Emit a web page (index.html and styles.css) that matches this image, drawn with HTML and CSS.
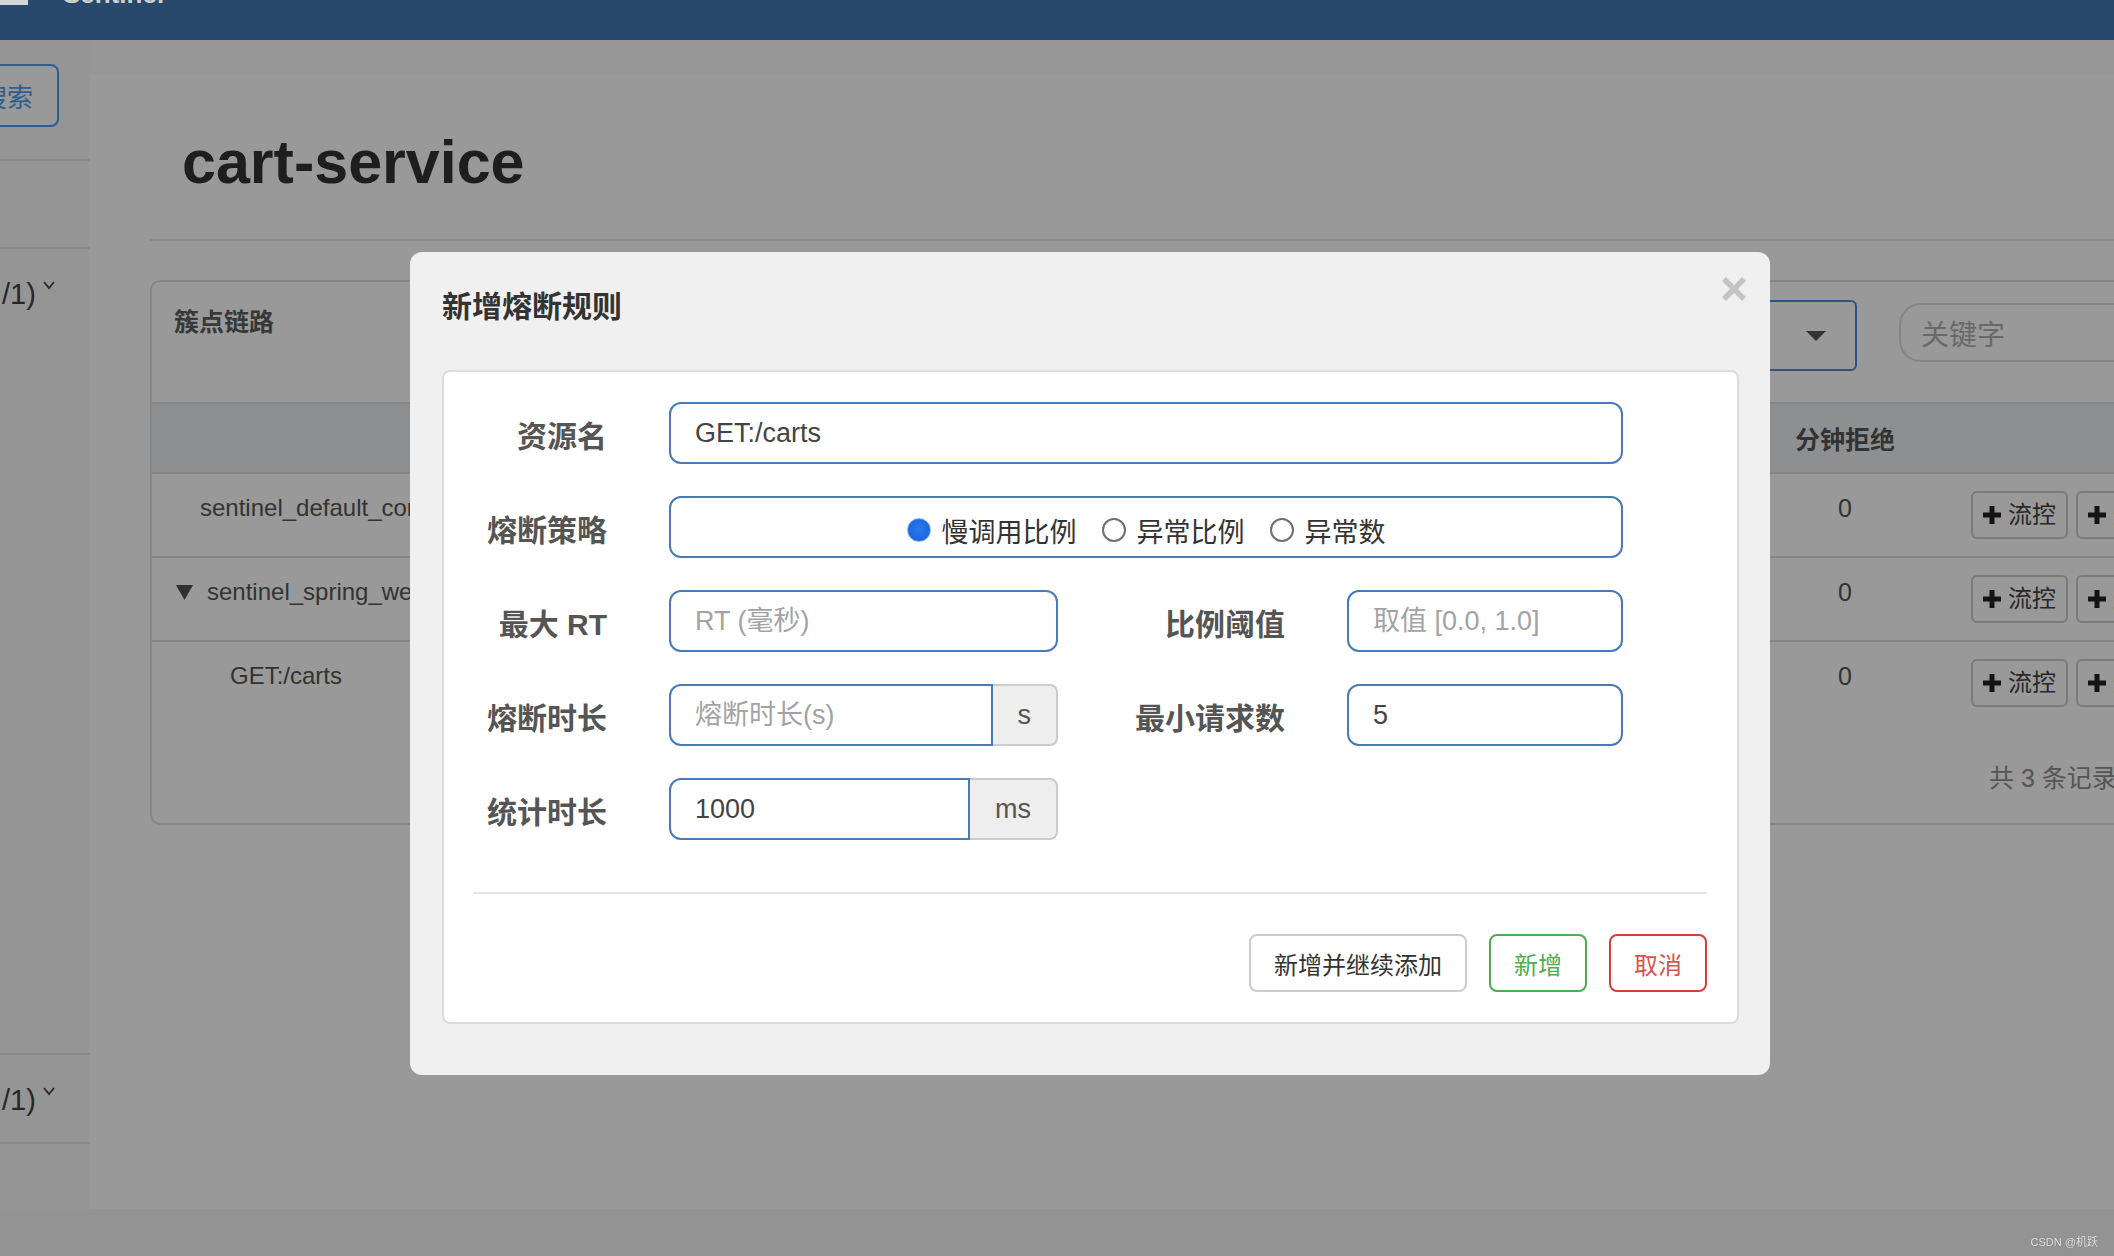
FILE: index.html
```html
<!DOCTYPE html>
<html lang="zh-CN">
<head>
<meta charset="utf-8">
<title>cart-service - 新增熔断规则</title>
<link rel="stylesheet" href="styles.css">
</head>
<body>
<header class="navbar">
  <div class="brand"><span class="brand-icon"></span><span class="brand-text">Sentinel</span></div>
</header>

<div class="layout">
  <aside class="sidebar">
    <div class="search-row"><button class="search-btn" type="button">搜索</button></div>
    <div class="app-item blank"></div>
    <div class="app-item expanded">
      <div class="app-head">/1)<svg class="chev" width="12" height="10" viewBox="0 0 12 10"><path d="M1 2l5 6 5-6" fill="none" stroke="#444" stroke-width="1.8"/></svg></div>
    </div>
    <div class="app-item last">
      <div class="app-head">/1)<svg class="chev" width="12" height="10" viewBox="0 0 12 10"><path d="M1 2l5 6 5-6" fill="none" stroke="#444" stroke-width="1.8"/></svg></div>
    </div>
  </aside>

  <main class="main">
    <div class="page">
      <h1 class="page-title">cart-service</h1>
      <hr class="title-rule">
      <section class="panel">
        <div class="panel-head">
          <div class="panel-title">簇点链路</div>
          <div class="select-box"><svg width="20" height="10" viewBox="0 0 20 10"><path d="M0 0h20L10 10z" fill="#555"/></svg></div>
          <div class="search-input">关键字</div>
        </div>
        <div class="tr th">
          <div class="c-name"></div>
          <div class="c-block">分钟拒绝</div>
          <div class="c-ops"></div>
        </div>
        <div class="tr row">
          <div class="c-name lvl0">sentinel_default_context</div>
          <div class="c-block">0</div>
          <div class="c-ops">
            <button class="op-btn" type="button"><svg width="20" height="20" viewBox="0 0 20 20"><path d="M10 1v18M1 10h18" stroke="#222" stroke-width="5"/></svg>流控</button>
            <button class="op-btn" type="button"><svg width="20" height="20" viewBox="0 0 20 20"><path d="M10 1v18M1 10h18" stroke="#222" stroke-width="5"/></svg>熔断</button>
          </div>
        </div>
        <div class="tr row">
          <div class="c-name lvl1"><svg width="17" height="15" viewBox="0 0 17 15"><path d="M0 0h17L8.5 15z" fill="#505050"/></svg>sentinel_spring_web_context</div>
          <div class="c-block">0</div>
          <div class="c-ops">
            <button class="op-btn" type="button"><svg width="20" height="20" viewBox="0 0 20 20"><path d="M10 1v18M1 10h18" stroke="#222" stroke-width="5"/></svg>流控</button>
            <button class="op-btn" type="button"><svg width="20" height="20" viewBox="0 0 20 20"><path d="M10 1v18M1 10h18" stroke="#222" stroke-width="5"/></svg>熔断</button>
          </div>
        </div>
        <div class="tr row">
          <div class="c-name lvl2">GET:/carts</div>
          <div class="c-block">0</div>
          <div class="c-ops">
            <button class="op-btn" type="button"><svg width="20" height="20" viewBox="0 0 20 20"><path d="M10 1v18M1 10h18" stroke="#222" stroke-width="5"/></svg>流控</button>
            <button class="op-btn" type="button"><svg width="20" height="20" viewBox="0 0 20 20"><path d="M10 1v18M1 10h18" stroke="#222" stroke-width="5"/></svg>熔断</button>
          </div>
        </div>
        <div class="panel-foot">共 3 条记录, 第 1 / 1 页</div>
      </section>
    </div>
  </main>
</div>

<div class="backdrop"></div>

<div class="modal" role="dialog">
  <div class="modal-head">
    <h4 class="modal-title">新增熔断规则</h4>
    <button class="modal-close" type="button"><svg width="26" height="26" viewBox="0 0 26 26"><path d="M3 3l20 20M23 3L3 23" stroke="#c4c4c4" stroke-width="5.5"/></svg></button>
  </div>
  <div class="modal-panel">
    <form class="rule-form">
      <div class="form-row">
        <label class="f-label">资源名</label>
        <input class="f-input span3" type="text" value="GET:/carts">
      </div>
      <div class="form-row">
        <label class="f-label">熔断策略</label>
        <div class="f-input span3 radios">
          <label class="opt"><input type="radio" name="grade" checked>慢调用比例</label>
          <label class="opt"><input type="radio" name="grade">异常比例</label>
          <label class="opt"><input type="radio" name="grade">异常数</label>
        </div>
      </div>
      <div class="form-row">
        <label class="f-label">最大 RT</label>
        <input class="f-input" type="text" placeholder="RT (毫秒)">
        <label class="f-label">比例阈值</label>
        <input class="f-input" type="text" placeholder="取值 [0.0, 1.0]">
      </div>
      <div class="form-row">
        <label class="f-label">熔断时长</label>
        <div class="input-group"><input class="f-input" type="text" placeholder="熔断时长(s)"><span class="addon">s</span></div>
        <label class="f-label">最小请求数</label>
        <input class="f-input" type="text" value="5">
      </div>
      <div class="form-row">
        <label class="f-label">统计时长</label>
        <div class="input-group"><input class="f-input" type="text" value="1000"><span class="addon">ms</span></div>
      </div>
    </form>
    <hr class="modal-sep">
    <div class="modal-actions">
      <button class="btn btn-default" type="button">新增并继续添加</button>
      <button class="btn btn-success" type="button">新增</button>
      <button class="btn btn-danger" type="button">取消</button>
    </div>
  </div>
</div>

<div class="watermark">CSDN @机跃</div>
</body>
</html>
```

FILE: styles.css
```css
:root {
  --sans: "Liberation Sans", "Noto Sans CJK SC", sans-serif;
}

* { box-sizing: border-box; }

body {
  margin: 0;
  width: 2114px;
  height: 1256px;
  overflow: hidden;
  position: relative;
  font-family: var(--sans);
  background: #f5f5f5;
}

button { font-family: var(--sans); cursor: pointer; }

/* ---------- navbar ---------- */
.navbar {
  position: relative;
  z-index: 3;
  height: 40px;
  background: #28496b;
  overflow: hidden;
}
.brand { display: flex; align-items: flex-start; }
.brand-icon { width: 28px; height: 5px; background: #d6d6d6; }
.brand-text {
  margin-left: 35px;
  margin-top: -19px;
  font-size: 26px;
  line-height: 26px;
  font-weight: bold;
  color: #cfcfcf;
  white-space: nowrap;
}

/* ---------- layout ---------- */
.layout { display: flex; height: 1169px; }

.sidebar {
  width: 90px;
  flex: none;
  background: #f8f8f8;
  overflow: hidden;
}
.search-row { padding: 24px 0 32px; }
.search-btn {
  display: block;
  margin-left: -40px;
  width: 99px;
  height: 63px;
  border: 2px solid #4b9bf3;
  border-radius: 8px;
  background: #fff;
  color: #4b9bf3;
  font-size: 26px;
  text-align: right;
  padding: 0 24px 0 0;
  white-space: nowrap;
}
.app-item { border-top: 2px solid #e5e5e5; }
.app-item.blank { height: 88px; }
.app-item.expanded { height: 806px; }
.app-item.last { height: 91px; border-bottom: 2px solid #e5e5e5; }
.app-head {
  height: 90px;
  display: flex;
  align-items: center;
  padding-left: 2px;
  font-size: 29px;
  color: #444;
  white-space: nowrap;
}
.chev { align-self: flex-start; margin-left: 7px; margin-top: 31px; }

.main {
  flex: 1;
  min-width: 0;
  background: #fafafa;
  padding-top: 34px;
  overflow: hidden;
}
.page {
  background: #fff;
  height: 1135px;
  padding: 58px 0 0 60px;
}
.page-title {
  margin: 0 0 0 32px;
  font-size: 61px;
  line-height: 61px;
  font-weight: bold;
  color: #333;
}
.title-rule {
  margin: 46px 0 0;
  border: 0;
  border-top: 2px solid #e6e6e6;
  height: 0;
}

.panel {
  margin-top: 39px;
  width: 2000px;
  border: 2px solid #dfdfdf;
  border-radius: 10px;
}
.panel-head {
  display: flex;
  align-items: flex-start;
  padding: 18px 0 31px 22px;
}
.panel-head > * { flex: none; }
.panel-title {
  width: 1383px;
  font-size: 25px;
  font-weight: bold;
  line-height: 44px;
  color: #5e5e5e;
}
.select-box {
  width: 300px;
  height: 71px;
  border: 2px solid #4a8ad9;
  border-radius: 6px;
  display: flex;
  align-items: center;
  justify-content: flex-end;
  padding-right: 29px;
}
.search-input {
  margin-left: 42px;
  margin-top: 3px;
  width: 320px;
  height: 59px;
  border: 2px solid #dcdcdc;
  border-radius: 22px;
  padding-left: 20px;
  font-size: 28px;
  color: #b0b0b0;
  display: flex;
  align-items: center;
}

.tr { display: flex; border-top: 2px solid #dedede; }
.tr.th {
  height: 70px;
  background: #edeef2;
  align-items: center;
  font-size: 25px;
  font-weight: bold;
  color: #555;
}
.tr.row {
  padding: 17px 0;
  font-size: 24px;
  line-height: 34px;
  color: #555;
  align-items: flex-start;
}
.c-name { width: 1608px; flex: none; white-space: nowrap; overflow: hidden; }
.c-name.lvl0 { padding-left: 48px; }
.c-name.lvl1 { padding-left: 24px; display: flex; align-items: center; gap: 14px; height: 34px; }
.c-name.lvl2 { padding-left: 78px; }
.c-block { width: 170px; flex: none; text-align: center; font-size: 25px; }
.c-ops { flex: 1; padding-left: 41px; display: flex; gap: 8px; }
.op-btn {
  height: 48px;
  border: 2px solid #ccc;
  border-radius: 6px;
  background: #fff;
  padding: 0 10px 0 9px;
  display: inline-flex;
  align-items: center;
  gap: 6px;
  font-size: 24px;
  line-height: 1;
  color: #444;
  white-space: nowrap;
}
.panel-foot {
  padding: 37px 0 28px 1837px;
  font-size: 25px;
  line-height: 34px;
  color: #8e8e8e;
  white-space: nowrap;
}

/* ---------- backdrop + modal ---------- */
.backdrop {
  position: fixed;
  inset: 0;
  background: rgba(0, 0, 0, 0.4);
  z-index: 1;
}

.modal {
  position: absolute;
  left: 410px;
  top: 252px;
  width: 1360px;
  z-index: 2;
  background: #f0f0f0;
  border-radius: 12px;
  padding: 35px 31px 51px 32px;
}
.modal-head { position: relative; }
.modal-title {
  margin: 0;
  font-size: 30px;
  line-height: 40px;
  font-weight: bold;
  color: #333;
}
.modal-close {
  position: absolute;
  top: -11px;
  right: -8px;
  width: 26px;
  height: 26px;
  padding: 0;
  border: 0;
  background: none;
  display: block;
}
.modal-close svg { display: block; }

.modal-panel {
  margin-top: 43px;
  background: #fff;
  border: 2px solid #dcdcdc;
  border-radius: 8px;
  padding: 30px 30px 30px 29px;
}
.rule-form { margin: 0; }
.form-row {
  display: grid;
  grid-template-columns: 196px 389px 289px 276px;
  height: 62px;
  margin-bottom: 32px;
}
.form-row:last-child { margin-bottom: 0; }
.f-label {
  text-align: right;
  padding: 8px 62px 0 0;
  height: 62px;
  line-height: 54px;
  font-size: 30px;
  font-weight: bold;
  color: #555;
  white-space: nowrap;
}
.f-input {
  width: 100%;
  height: 62px;
  margin: 0;
  border: 2px solid #477ab6;
  border-radius: 12px;
  padding: 0 24px;
  font-family: var(--sans);
  font-size: 27px;
  color: #444;
  background: #fff;
  outline: none;
}
.f-input::placeholder { color: #a3a3a3; }
.span3 { grid-column: 2 / 5; }

.radios {
  display: flex;
  justify-content: center;
  align-items: center;
  padding-top: 6px;
}
.opt {
  display: flex;
  align-items: center;
  gap: 11px;
  margin: 0 12.5px;
  font-size: 27px;
  color: #333;
  white-space: nowrap;
}
.opt input {
  appearance: none;
  -webkit-appearance: none;
  margin: 0;
  width: 24px;
  height: 24px;
  border-radius: 50%;
  border: 2px solid #6e6e6e;
  background: #fff;
  flex: none;
}
.opt input:checked {
  border: 1px solid #8db6f2;
  background: radial-gradient(circle at 50% 45%, #2a7af0 0, #1b66df 70%);
}

.input-group { display: flex; height: 62px; }
.input-group .f-input {
  flex: 1;
  min-width: 0;
  width: auto;
  border-radius: 12px 0 0 12px;
}
.addon {
  display: flex;
  align-items: center;
  padding: 0 25px;
  border: 2px solid #ccc;
  border-left: 0;
  border-radius: 0 8px 8px 0;
  background: #eee;
  font-size: 27px;
  color: #555;
}

.modal-sep {
  margin: 52px 0 40px;
  border: 0;
  border-top: 2px solid #e5e5e5;
  height: 0;
}
.modal-actions {
  display: flex;
  justify-content: flex-end;
  gap: 22px;
}
.btn {
  height: 58px;
  border: 2px solid #ccc;
  border-radius: 8px;
  background: #fff;
  padding: 0 23px;
  font-size: 24px;
  white-space: nowrap;
}
.btn-default { border-color: #ccc; color: #333; }
.btn-success { border-color: #4cae4c; color: #4cae4c; }
.btn-danger { border-color: #d43f3a; color: #d9534f; }

.watermark {
  position: absolute;
  right: 16px;
  bottom: 7px;
  z-index: 4;
  font-size: 11px;
  color: #e4e4e4;
  text-shadow: 0 0 1px #666;
  white-space: nowrap;
}
```
